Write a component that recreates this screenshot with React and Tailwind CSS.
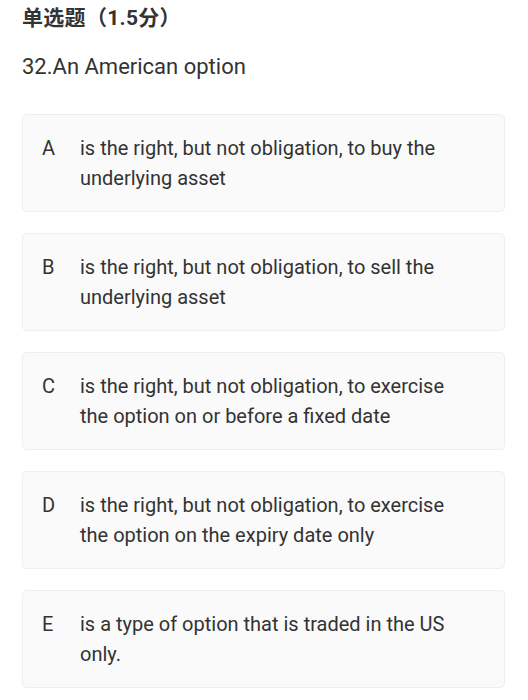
const options = [
  { key: "A", text: "is the right, but not obligation, to buy the underlying asset" },
  { key: "B", text: "is the right, but not obligation, to sell the underlying asset" },
  { key: "C", text: "is the right, but not obligation, to exercise the option on or before a fixed date" },
  { key: "D", text: "is the right, but not obligation, to exercise the option on the expiry date only" },
  { key: "E", text: "is a type of option that is traded in the US only." },
];

const App = () => {
  return (
    <section
      className="bg-white min-h-[700px] px-[22px] pt-[4px] text-[#333]"
      style={{ fontFamily: 'Roboto, "Noto Sans CJK SC", sans-serif' }}
    >
      <h2 className="text-[21px] font-bold leading-[28px] tracking-[0.3px]">单选题（1.5分）</h2>
      <p className="text-[22px] leading-[30px] mt-[20px]">32.An American option</p>
      <div className="flex flex-col gap-[21px] mt-[32px] mr-[1px]">
        {options.map((o) => (
          <div
            key={o.key}
            className="flex bg-[#fafafa] border border-[#efefef] rounded-[5px] pl-[19px] pr-[33px] py-[18px] text-[20px] leading-[30px]"
          >
            <span className="w-[38px] shrink-0">{o.key}</span>
            <span>{o.text}</span>
          </div>
        ))}
      </div>
    </section>
  );
};

export default App;
